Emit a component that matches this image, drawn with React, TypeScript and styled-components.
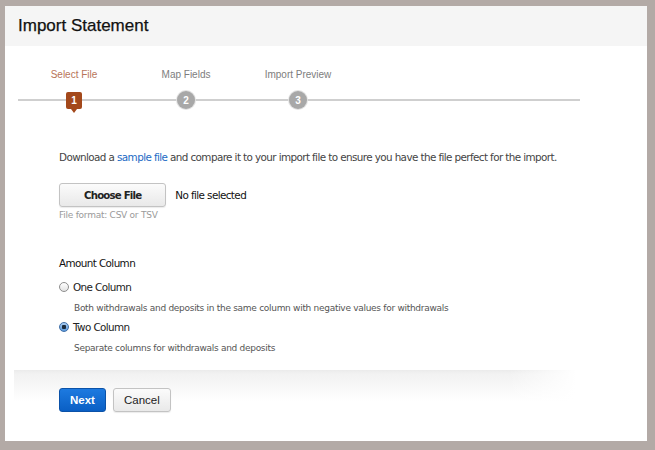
import styled, { createGlobalStyle } from 'styled-components';

const GlobalStyle = createGlobalStyle`
    html, body {
        margin: 0;
        padding: 0;
        background: #b3aaa6;
    }
    body {
        font-family: "DejaVu Sans", "Liberation Sans", sans-serif;
    }
`;

const Page = styled.div`
    width: 655px;
    height: 450px;
    box-sizing: border-box;
    padding: 6px 8px 9px 5px;
    background: #b3aaa6;
`;

const Panel = styled.div`
    height: 100%;
    background: #fff;
    display: flex;
    flex-direction: column;
`;

const Header = styled.div`
    height: 40px;
    background: #f5f5f5;
    display: flex;
    align-items: center;
    padding-left: 13px;
`;

const Title = styled.h1`
    margin: 0;
    font-family: "Liberation Sans", Arial, sans-serif;
    font-size: 17px;
    font-weight: normal;
    color: #111;
    -webkit-text-stroke: 0.25px #111;
`;

const Stepper = styled.div`
    margin: 21px 0 0 13px;
    width: 562px;
`;

const StepRow = styled.div`
    display: flex;
    height: ${p => p.$h}px;
    align-items: center;
`;

const Track = styled(StepRow)`
    margin-top: 9px;
    background: linear-gradient(#fff 9px, #cfcfcf 9px, #cfcfcf 11px, #fff 11px);
`;

const StepCell = styled.div`
    width: 112px;
    display: flex;
    justify-content: center;
`;

const StepLabel = styled.span`
    font-family: "Liberation Sans", Arial, sans-serif;
    font-size: 10px;
    color: ${p => (p.$active ? '#b87458' : '#7d7d7d')};
`;

const ActiveMarker = styled.div`
    position: relative;
    width: 16px;
    height: 17px;
    border-radius: 2px;
    background: #a3481b;
    color: #fff;
    font-family: "Liberation Sans", Arial, sans-serif;
    font-weight: bold;
    font-size: 10px;
    display: flex;
    align-items: center;
    justify-content: center;
    &::after {
        content: '';
        position: absolute;
        left: 5px;
        bottom: -4px;
        border-left: 3px solid transparent;
        border-right: 3px solid transparent;
        border-top: 4px solid #a3481b;
    }
`;

const StepDot = styled.div`
    width: 18px;
    height: 18px;
    border-radius: 50%;
    background: #a8a8a8;
    box-shadow: 0 0 0 1px #e2e2e2;
    color: #fff;
    font-family: "Liberation Sans", Arial, sans-serif;
    font-weight: bold;
    font-size: 10px;
    display: flex;
    align-items: center;
    justify-content: center;
`;

const Body = styled.div`
    padding-left: 54px;
    display: flex;
    flex-direction: column;
    align-items: flex-start;
    font-size: 10.4px;
    letter-spacing: -0.6px;
`;

const Intro = styled.p`
    margin: 39px 0 0;
    line-height: 16px;
    color: #444;
`;

const Link = styled.a`
    color: #1b6ac4;
    text-decoration: none;
`;

const FileRow = styled.div`
    margin-top: 18px;
    display: flex;
    align-items: center;
    gap: 9px;
`;

const GrayButton = styled.button`
    height: 24px;
    padding: 0 ${p => p.$px || 10}px;
    border: 1px solid #c3c3c3;
    border-radius: 3px;
    background: linear-gradient(#fbfbfb, #e9e9e9);
    box-shadow: 0 1px 1px rgba(0, 0, 0, 0.08);
    color: #222;
    font-family: ${p => (p.$mac ? '"DejaVu Sans", sans-serif' : '"Liberation Sans", Arial, sans-serif')};
    font-size: ${p => (p.$mac ? 10.2 : 11.5)}px;
    font-weight: ${p => (p.$mac ? 'bold' : 'normal')};
    letter-spacing: ${p => (p.$mac ? -0.8 : 0)}px;
`;

const FileName = styled.span`
    color: #111;
`;

const Hint = styled.div`
    margin-top: 2px;
    font-size: 9px;
    letter-spacing: -0.25px;
    line-height: 12px;
    color: #9a9a9a;
`;

const SectionTitle = styled.div`
    margin-top: 34px;
    line-height: 16px;
    color: #111;
`;

const RadioRow = styled.label`
    margin-top: ${p => p.$mt}px;
    display: flex;
    align-items: center;
    gap: 4px;
    line-height: 16px;
    color: #222;
`;

const RadioDot = styled.span`
    width: 10px;
    height: 10px;
    border-radius: 50%;
    box-sizing: border-box;
    border: 1px solid ${p => (p.$on ? '#3f6fa8' : '#8e8e8e')};
    background: ${p =>
        p.$on
            ? 'radial-gradient(circle, #1b2b3c 0 2px, transparent 2.5px), linear-gradient(#a9cdf2, #5b98db)'
            : 'linear-gradient(#ffffff, #e3e3e3)'};
`;

const Desc = styled.div`
    margin: 5px 0 0 15px;
    font-size: 9px;
    letter-spacing: -0.29px;
    line-height: 16px;
    color: #555;
`;

const Footer = styled.div`
    margin: 14px 0 0 9px;
    width: 562px;
    padding: 18px 0 0 45px;
    box-sizing: border-box;
    display: flex;
    gap: 7px;
    background:
        linear-gradient(to right, rgba(255, 255, 255, 0) 88%, #fff 100%),
        linear-gradient(#ebebeb 0, #f2f2f2 4px, #f8f8f8 18px, #fff 32px);
`;

const PrimaryButton = styled.button`
    height: 24px;
    padding: 0 10px;
    border: 1px solid #0b52a8;
    border-radius: 3px;
    background: linear-gradient(#1d7ae0, #0a5fc4);
    color: #fff;
    font-family: "Liberation Sans", Arial, sans-serif;
    font-size: 11.5px;
    font-weight: bold;
`;

const steps = ['Select File', 'Map Fields', 'Import Preview'];

export default function App() {
    return (
        <>
            <GlobalStyle />
            <Page>
                <Panel>
                    <Header>
                        <Title>Import Statement</Title>
                    </Header>
                    <Stepper>
                        <StepRow $h={14}>
                            {steps.map((s, i) => (
                                <StepCell key={s}>
                                    <StepLabel $active={i === 0}>{s}</StepLabel>
                                </StepCell>
                            ))}
                        </StepRow>
                        <Track $h={20}>
                            {steps.map((s, i) => (
                                <StepCell key={s}>
                                    {i === 0 ? <ActiveMarker>1</ActiveMarker> : <StepDot>{i + 1}</StepDot>}
                                </StepCell>
                            ))}
                        </Track>
                    </Stepper>
                    <Body>
                        <Intro>
                            Download a <Link href="#">sample file</Link> and compare it to your import file to ensure you have the file perfect for the import.
                        </Intro>
                        <FileRow>
                            <GrayButton $mac $px={24}>Choose File</GrayButton>
                            <FileName>No file selected</FileName>
                        </FileRow>
                        <Hint>File format: CSV or TSV</Hint>
                        <SectionTitle>Amount Column</SectionTitle>
                        <RadioRow $mt={8}>
                            <RadioDot />
                            One Column
                        </RadioRow>
                        <Desc>Both withdrawals and deposits in the same column with negative values for withdrawals</Desc>
                        <RadioRow $mt={3}>
                            <RadioDot $on />
                            Two Column
                        </RadioRow>
                        <Desc>Separate columns for withdrawals and deposits</Desc>
                    </Body>
                    <Footer>
                        <PrimaryButton>Next</PrimaryButton>
                        <GrayButton>Cancel</GrayButton>
                    </Footer>
                </Panel>
            </Page>
        </>
    );
}
